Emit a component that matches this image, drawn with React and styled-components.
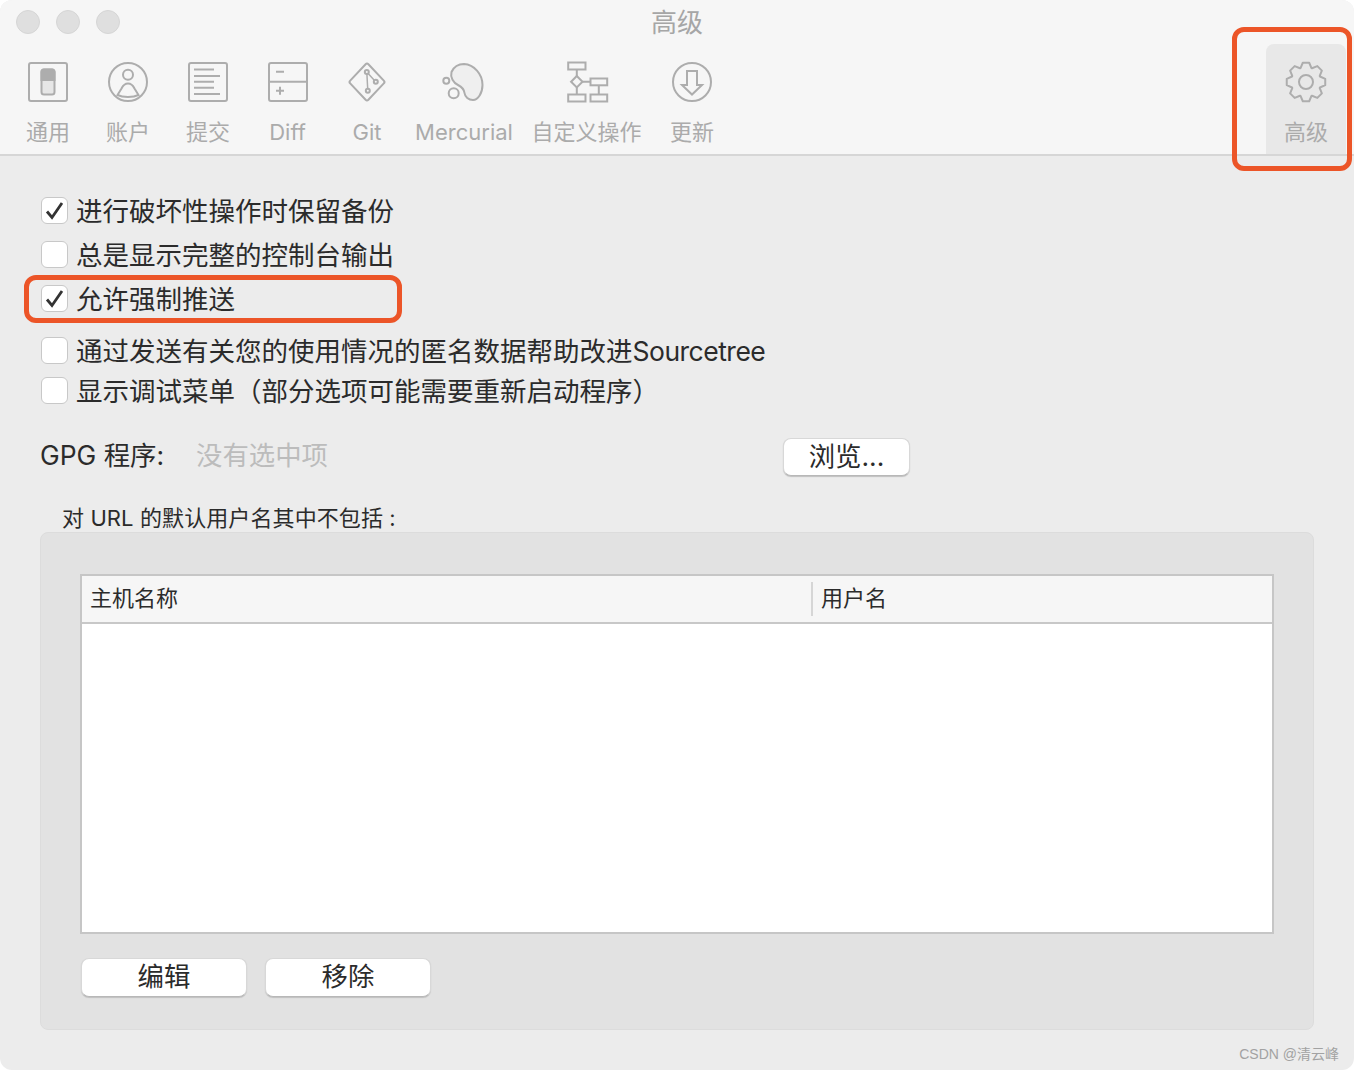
import React from "react";
import styled, { createGlobalStyle } from "styled-components";

const Global = createGlobalStyle`
  html, body { margin: 0; padding: 0; background: #fff; }
  body { font-family: Inter, "Noto Sans CJK SC", sans-serif; color: #2b2b2b; }
  * { box-sizing: border-box; }
`;

const Win = styled.div`
  position: relative;
  width: 1354px;
  height: 1070px;
  background: #ececec;
  border-radius: 12px;
  overflow: hidden;
`;
const Head = styled.header`
  height: 156px;
  background: #f6f6f6;
  border-bottom: 2px solid #d6d6d6;
`;
const TitleBar = styled.div`
  position: relative;
  height: 44px;
  padding-top: 2px;
  display: flex;
  align-items: center;
  justify-content: center;
`;
const Lights = styled.div`
  position: absolute;
  left: 16px;
  top: 10px;
  display: flex;
  gap: 16px;
`;
const Light = styled.span`
  width: 24px;
  height: 24px;
  border-radius: 50%;
  background: #dfdfdf;
  border: 1px solid #d5d5d5;
`;
const Title = styled.div`
  font-size: 26px;
  line-height: 42px;
  color: #a6a6a6;
`;
const Toolbar = styled.nav`
  display: flex;
  padding: 0 8px;
  height: 110px;
`;
const Tool = styled.div`
  width: ${(p) => p.$w || 80}px;
  display: flex;
  flex-direction: column;
  align-items: center;
  padding-top: 18px;
  background: ${(p) => (p.$active ? "#e8e8e8" : "transparent")};
  border-radius: 8px 8px 0 0;
  ${(p) => p.$active && "margin-left: auto;"}
`;
const ToolIcon = styled.svg`
  width: 44px;
  height: 40px;
  flex: none;
  fill: none;
  stroke: #adadad;
  stroke-width: 2;
  overflow: visible;
`;
const ToolLabel = styled.span`
  margin-top: 14px;
  font-size: 22px;
  line-height: 32px;
  color: #ababab;
  white-space: nowrap;
`;
const Main = styled.main`
  padding: 32px 0 0 40px;
`;
const CheckRow = styled.label`
  height: ${(p) => p.$h || 44}px;
  margin-top: ${(p) => p.$mt || 0}px;
  display: flex;
  align-items: center;
  gap: 8px;
  padding-left: 1px;
  font-size: 26.5px;
  color: #2b2b2b;
  white-space: nowrap;
`;
const RowText = styled.span`
  margin-top: -2px;
`;
const Latin = styled.span`
  letter-spacing: -0.5px;
`;
const Box = styled.span`
  width: 27px;
  height: 27px;
  flex: none;
  display: flex;
  align-items: center;
  justify-content: center;
  background: #fff;
  border: 1px solid #c8c8c8;
  border-radius: 6px;
`;
const GpgRow = styled.div`
  margin-top: 28px;
  width: 870px;
  height: 38px;
  display: flex;
  align-items: center;
  font-size: 26.4px;
`;
const GpgLabel = styled.span`
  width: 156px;
  margin-top: -7px;
`;
const GpgValue = styled.span`
  flex: 1;
  margin-top: -7px;
  color: #bcbcbc;
`;
const Btn = styled.button`
  width: ${(p) => p.$w}px;
  height: ${(p) => p.$h || 39}px;
  padding: 0 0 3px;
  background: #fff;
  border: 1px solid #d8d8d8;
  border-bottom-color: #b8b8b8;
  border-radius: 8px;
  box-shadow: 0 1px 1px 0 #c0c0c0;
  font-family: inherit;
  font-size: 26.4px;
  line-height: 30px;
  color: #2b2b2b;
`;
const GroupLabel = styled.div`
  margin: 28px 0 0 22px;
  height: 28px;
  line-height: 28px;
  font-size: 22px;
  letter-spacing: 0.1px;
  color: #2b2b2b;
`;
const Group = styled.section`
  width: 1274px;
  height: 498px;
  padding: 41px 39px 0;
  background: #e2e2e2;
  border: 1px solid #dcdcdc;
  border-radius: 8px;
`;
const Table = styled.div`
  height: 360px;
  background: #fff;
  border: 2px solid #c6c6c6;
  display: flex;
  flex-direction: column;
`;
const THead = styled.div`
  height: 48px;
  display: flex;
  align-items: center;
  background: #f6f6f6;
  border-bottom: 2px solid #c8c8c8;
  font-size: 22px;
`;
const Col = styled.div`
  width: ${(p) => p.$w}px;
  height: 34px;
  line-height: 32px;
  padding-left: ${(p) => p.$pl}px;
  ${(p) => p.$sep && "border-left: 2px solid #d6d6d6;"}
`;
const Actions = styled.div`
  margin: 24px 0 0 1px;
  display: flex;
  gap: 18px;
`;
const Mark = styled.div`
  position: absolute;
  right: 15px;
  top: 1045px;
  font-size: 14px;
  line-height: 18px;
  color: #a2a2a2;
  font-family: "Liberation Sans", "Noto Sans CJK SC", sans-serif;
`;
const Highlight = styled.div`
  position: absolute;
  left: ${(p) => p.$x}px;
  top: ${(p) => p.$y}px;
  width: ${(p) => p.$w}px;
  height: ${(p) => p.$h}px;
  border: 5px solid #ec5528;
  border-radius: 12px;
  pointer-events: none;
`;

const gearPath = (() => {
  const pts = [];
  const n = 8;
  const R = 19.5, r = 15;
  for (let i = 0; i < n; i++) {
    const a = (i / n) * Math.PI * 2 - Math.PI / 2;
    const s = Math.PI / n;
    [[a - s * 0.95, r], [a - s * 0.42, R], [a + s * 0.42, R], [a + s * 0.95, r]].forEach(([t, q]) => {
      pts.push(`${(22 + q * Math.cos(t)).toFixed(2)} ${(20 + q * Math.sin(t)).toFixed(2)}`);
    });
  }
  return "M" + pts.join("L") + "Z";
})();

const icons = {
  general: (
    <>
      <rect x="3" y="1" width="38" height="38" rx="2" />
      <rect x="15.5" y="7.5" width="13" height="25" rx="2.5" fill="#e6e6e6" />
      <path d="M15.5 18V10a2.5 2.5 0 0 1 2.5-2.5h8a2.5 2.5 0 0 1 2.5 2.5v8z" fill="#adadad" />
    </>
  ),
  account: (
    <>
      <circle cx="22" cy="20" r="19" />
      <circle cx="22" cy="12.7" r="5" />
      <path d="M22 21.5c3 0 5 2 6.5 5l4 6.5c-3 1.5-7 2-10.5 2s-7.5-.5-10.5-2l4-6.5c1.5-3 3.5-5 6.5-5z" />
    </>
  ),
  commit: (
    <>
      <rect x="3" y="1" width="38" height="38" rx="2" />
      <path d="M8 7.5h20M8 14h26M8 19.7h20M8 25.7h20M8 32h26" />
    </>
  ),
  diff: (
    <>
      <rect x="3" y="1" width="38" height="38" rx="2" />
      <path d="M3 19.7h38M10 9.7h8M10 28.7h8M14 24.7v8" />
    </>
  ),
  git: (
    <>
      <path d="M20.6 2.2a2 2 0 0 1 2.8 0l15.4 16.4a2 2 0 0 1 0 2.8L23.4 37.8a2 2 0 0 1-2.8 0L5.2 21.4a2 2 0 0 1 0-2.8z" />
      <path d="M21.8 10l1 18.7M21.8 10l8.8 9.7" strokeWidth="1.5" />
      <circle cx="21.8" cy="10" r="2" fill="#f6f6f6" />
      <circle cx="22.8" cy="28.7" r="2" fill="#f6f6f6" />
      <circle cx="30.8" cy="19.7" r="2" fill="#f6f6f6" />
    </>
  ),
  hg: (
    <>
      <circle cx="4.3" cy="18.7" r="3" />
      <circle cx="11.7" cy="31.3" r="5" />
      <path d="M9.5 10C12 4.5 17 2 22 2c10 .5 18.5 10 18.5 21 0 8-4.5 15-9.5 15-4.5 0-8-3-8.5-7-.5-4-2.5-6-6.5-8-4.5-2-8-7.5-6.5-13z" fill="#efefef" />
    </>
  ),
  custom: (
    <g transform="translate(1.5 0)">
      <rect x="1.7" y="0.5" width="17.3" height="7" />
      <path d="M10.3 7.5v7M10.3 25v7.5M16 19.7h8M32.3 23.3v9" />
      <path d="M10.3 14l5.7 5.7-5.7 5.7-5.7-5.7z" />
      <rect x="24" y="16.5" width="16.7" height="6.8" />
      <rect x="1.7" y="32.5" width="17.3" height="7" />
      <rect x="24" y="32.5" width="16.7" height="7" />
    </g>
  ),
  update: (
    <>
      <circle cx="22" cy="20" r="19" />
      <path d="M17 9h10v14h5L22 32.5 12 23h5z" />
    </>
  ),
  gear: (
    <>
      <path d={gearPath} strokeLinejoin="round" />
      <circle cx="22" cy="20" r="7" />
    </>
  ),
};

const tools = [
  ["general", "通用", 80],
  ["account", "账户", 80],
  ["commit", "提交", 80],
  ["diff", "Diff", 79],
  ["git", "Git", 80],
  ["hg", "Mercurial", 114],
  ["custom", "自定义操作", 131],
  ["update", "更新", 80],
];

const Check = () => (
  <svg width="19" height="19" viewBox="0 0 19 19" fill="none" stroke="#333" strokeWidth="2.8">
    <path d="M2 10.5l5 6L17 2" />
  </svg>
);

const checks = [
  [<>进行破坏性操作时保留备份</>, true, 44, 0],
  [<>总是显示完整的控制台输出</>, false, 44, 0],
  [<>允许强制推送</>, true, 44, 0],
  [<>通过发送有关您的使用情况的匿名数据帮助改进<Latin>Sourcetree</Latin></>, false, 40, 10],
  [<>显示调试菜单（部分选项可能需要重新启动程序）</>, false, 40, 0],
];

export default function App() {
  return (
    <Win>
      <Global />
      <Head>
        <TitleBar>
          <Lights>
            <Light />
            <Light />
            <Light />
          </Lights>
          <Title>高级</Title>
        </TitleBar>
        <Toolbar>
          {tools.map(([k, label, w]) => (
            <Tool key={k} $w={w}>
              <ToolIcon viewBox="0 0 44 40">{icons[k]}</ToolIcon>
              <ToolLabel>{label}</ToolLabel>
            </Tool>
          ))}
          <Tool $active>
            <ToolIcon viewBox="0 0 44 40">{icons.gear}</ToolIcon>
            <ToolLabel>高级</ToolLabel>
          </Tool>
        </Toolbar>
      </Head>
      <Main>
        {checks.map(([t, on, h, mt], i) => (
          <CheckRow key={i} $h={h} $mt={mt}>
            <Box>{on && <Check />}</Box>
            <RowText>{t}</RowText>
          </CheckRow>
        ))}
        <GpgRow>
          <GpgLabel>GPG 程序:</GpgLabel>
          <GpgValue>没有选中项</GpgValue>
          <Btn $w={127} $h={38}>浏览...</Btn>
        </GpgRow>
        <GroupLabel>对 URL 的默认用户名其中不包括 :</GroupLabel>
        <Group>
          <Table>
            <THead>
              <Col $w={729} $pl={8}>主机名称</Col>
              <Col $w={460} $pl={8} $sep>用户名</Col>
            </THead>
          </Table>
          <Actions>
            <Btn $w={166}>编辑</Btn>
            <Btn $w={166}>移除</Btn>
          </Actions>
        </Group>
      </Main>
      <Mark>CSDN @清云峰</Mark>
      <Highlight $x={1232} $y={27} $w={120} $h={144} />
      <Highlight $x={24} $y={275} $w={378} $h={48} />
    </Win>
  );
}
